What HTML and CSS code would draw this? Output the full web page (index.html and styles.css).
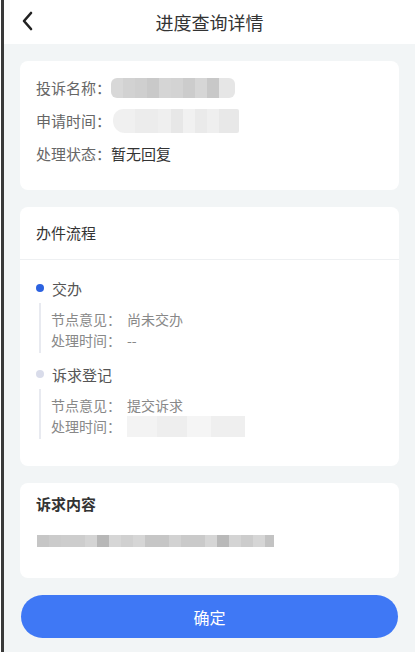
FILE: index.html
```html
<!DOCTYPE html>
<html lang="zh-CN">
<head>
    <meta charset="UTF-8">
    <meta name="viewport" content="width=device-width, initial-scale=1.0">
    <title>进度查询详情</title>
    <link rel="stylesheet" href="styles.css">
</head>
<body>
    <div class="page">
        <div class="topbar">
            <span class="back">
                <svg width="12" height="20" viewBox="0 0 12 20">
                    <path d="M10 2 L3 10 L10 18" fill="none" stroke="#222" stroke-width="2.6" stroke-linecap="round" stroke-linejoin="round"/>
                </svg>
            </span>
            <span class="titulo">进度查询详情</span>
        </div>

        <div class="card info">
            <div class="linha"><span class="rotulo">投诉名称：</span><span class="mosaico m-nome"></span></div>
            <div class="linha"><span class="rotulo">申请时间：</span><span class="mosaico m-data"></span></div>
            <div class="linha"><span class="rotulo">处理状态：</span><span class="valor">暂无回复</span></div>
        </div>

        <div class="card fluxo">
            <div class="card-cabecalho">办件流程</div>
            <div class="etapas">
                <div class="etapa">
                    <div class="etapa-titulo"><span class="ponto ativo"></span>交办</div>
                    <div class="etapa-detalhe">
                        <div><span class="d-rotulo">节点意见：</span>尚未交办</div>
                        <div><span class="d-rotulo">处理时间：</span>--</div>
                    </div>
                </div>
                <div class="etapa">
                    <div class="etapa-titulo"><span class="ponto"></span>诉求登记</div>
                    <div class="etapa-detalhe">
                        <div><span class="d-rotulo">节点意见：</span>提交诉求</div>
                        <div><span class="d-rotulo">处理时间：</span><span class="mosaico m-hora"></span></div>
                    </div>
                </div>
            </div>
        </div>

        <div class="card conteudo">
            <div class="conteudo-titulo">诉求内容</div>
            <div class="mosaico m-texto"></div>
        </div>

        <button class="confirmar">确定</button>
    </div>
</body>
</html>
```

FILE: styles.css
```css
html, body {
    margin: 0;
    padding: 0;
    background: #ffffff;
}
body {
    font-family: "Noto Sans CJK SC", "Noto Sans", sans-serif;
    color: #333;
}
.page {
    margin-left: 1px;
    border-left: 3px solid #3a3a3a;
    background: #f2f5f6;
    min-height: 652px;
    box-sizing: border-box;
    padding-bottom: 14px;
}
.topbar {
    height: 44px;
    background: #fff;
    display: flex;
    align-items: center;
    justify-content: center;
    position: relative;
}
.back {
    position: absolute;
    left: 17px;
    top: 11px;
}
.titulo {
    font-size: 18px;
    color: #333;
}
.card {
    background: #fff;
    border-radius: 8px;
    margin: 17px 16px 0 16px;
}
.info {
    padding: 10px 16px 20px 16px;
}
.linha {
    display: flex;
    align-items: center;
    height: 33px;
    font-size: 15px;
}
.rotulo {
    color: #666;
}
.valor {
    color: #333;
}
.mosaico {
    display: inline-block;
}
.m-nome {
    width: 124px;
    height: 20px;
    border-radius: 6px;
    background: linear-gradient(90deg, #d8d8d8 0 12px, #d2d2d2 12px 24px, #cfcfcf 24px 36px, #c9c9c9 36px 48px, #d5d5d5 48px 60px, #d3d3d3 60px 72px, #cccccc 72px 84px, #d6d6d6 84px 96px, #c8c8c8 96px 108px, #e6e6e6 108px 124px);
}
.m-data {
    width: 126px;
    height: 24px;
    margin-left: 2px;
    border-radius: 10px 2px 2px 12px;
    background: linear-gradient(90deg, #f0f0f0 0 22px, #ececec 22px 45px, #efefef 45px 58px, #e7e7e7 58px 70px, #f1f1f1 70px 82px, #eaeaea 82px 94px, #efefef 94px 106px, #e8e8e8 106px 126px);
}
.fluxo {
    padding-bottom: 27px;
}
.card-cabecalho {
    height: 52px;
    line-height: 52px;
    padding: 0 16px;
    font-size: 15px;
    color: #333;
    border-bottom: 1px solid #eef0f2;
}
.etapas {
    padding: 18px 16px 0 16px;
}
.etapa + .etapa {
    margin-top: 11px;
}
.etapa-titulo {
    display: flex;
    align-items: center;
    height: 20px;
    font-size: 15px;
    color: #555;
}
.ponto {
    width: 8px;
    height: 8px;
    border-radius: 50%;
    background: #d9dcea;
    margin: 0 8px 0 0;
}
.ponto.ativo {
    background: #2c62e0;
}
.etapa-detalhe {
    margin: 5px 0 0 3px;
    border-left: 2px solid #e8eaf0;
    padding: 6px 0 2px 10px;
    font-size: 14px;
    line-height: 21px;
    color: #888;
}
.d-rotulo {
    margin-right: 6px;
}
.m-hora {
    width: 118px;
    height: 21px;
    vertical-align: top;
    background: linear-gradient(90deg, #f3f3f3 0 30px, #eeeeee 30px 60px, #f5f5f5 60px 84px, #efefef 84px 118px);
}
.conteudo {
    padding: 10px 16px 31px 16px;
}
.conteudo-titulo {
    font-size: 15px;
    font-weight: 600;
    line-height: 22px;
    color: #333;
}
.m-texto {
    display: block;
    margin: 20px 0 0 1px;
    width: 237px;
    height: 12px;
    background: linear-gradient(90deg, #c6c6c6 0 12px, #cbcbcb 12px 24px, #cdcdcd 24px 48px, #d4d4d4 48px 60px, #b7b7b7 60px 72px, #d6d6d6 72px 84px, #d0d0d0 84px 96px, #d6d6d6 96px 108px, #c6c6c6 108px 132px, #d2d2d2 132px 144px, #cacaca 144px 168px, #d6d6d6 168px 180px, #b9b9b9 180px 192px, #d4d4d4 192px 204px, #cccccc 204px 216px, #d6d6d6 216px 228px, #c3c3c3 228px 237px);
}
.confirmar {
    display: block;
    width: calc(100% - 34px);
    height: 43px;
    margin: 17px 17px 0 17px;
    border: none;
    border-radius: 22px;
    background: #3f78f5;
    color: #fff;
    font-family: "Noto Sans CJK SC", "Noto Sans", sans-serif;
    font-size: 16px;
    cursor: pointer;
}
```
